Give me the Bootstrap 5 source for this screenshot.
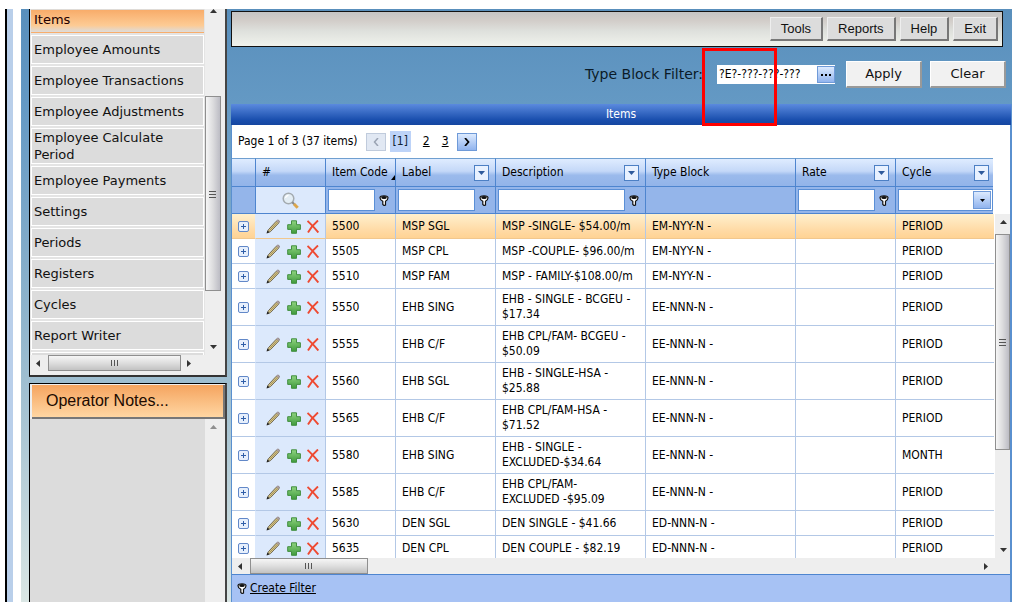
<!DOCTYPE html>
<html lang="en">
<head>
<meta charset="utf-8">
<meta name="viewport" content="width=device-width, initial-scale=1">
<title>Items</title>
<link href="https://cdn.jsdelivr.net/npm/bootstrap@5.3.0/dist/css/bootstrap.min.css" rel="stylesheet">
<style>
body{background:#fff;color:#000;font:12px/15px "DejaVu Sans Condensed","Noto Sans",sans-serif;padding:9px 6px 7px 5px}
a{color:#000}
.frame{border-left:2px solid #000}
.strip{width:6px;flex:none;margin-right:8px;background:#b9cfea}
.work{min-width:0;background:linear-gradient(#598fbc,#6499c4 16%,#8db3cc 50%,#a9c5d3 70%,#dae6e4);padding-left:8px}
.side{width:198px;gap:6px;margin-right:4px;font-family:"DejaVu Sans",sans-serif}
.pane{border:1px solid #000;border-right:2px solid #444;background:#eee}
.pane-top{border-top:0;border-bottom:2px solid #333;padding-bottom:4px}
.menu-view{height:346px;overflow:hidden;background:#e4e4e4}
.menu-list{gap:2px;padding:0 1px;border-radius:0}
.menu-list .list-group-item{border:1px solid #fff;border-radius:0;background:#dcdcdc;color:#111;font-size:13px;line-height:17px;padding:0 2px;min-height:29px;display:flex;align-items:center}
.menu-list .list-group-item.active{min-height:24px;padding-bottom:4px;background:linear-gradient(#f8ac6a,#fdcb94 70%,#dcdcdc);border-color:transparent;color:#200}
.bar-v{width:16px;background:#eee}
.bar-h{height:16px;background:#eee}
.arrow{width:16px;height:16px;flex:none;display:flex;align-items:center;justify-content:center}
.grip{border:1px solid #8f8f8f;display:flex;align-items:center;justify-content:center}
.bar-v .grip{background:linear-gradient(90deg,#f6f6f6,#dcdcde 50%,#bcbcc4)}
.bar-h .grip{background:linear-gradient(#f6f6f6,#dedede 50%,#c2c2c2)}
.menu-grip{height:195px}
.menu-grip-h{width:139px;margin-left:2px}
.notes-title{font:16px/32px "Liberation Sans",Arial,sans-serif;margin:1px 0 0 2px;padding-left:14px;background:linear-gradient(#f5a45f,#ffd6a2);border:solid #777;border-width:0 2px 2px 0;color:#200a00}
.notes-body{background:#dcdcdc}
.toolbar{border:1px solid #111;height:36px;margin:2px 9px 0 0;padding:0 4px;gap:4px;background:linear-gradient(#c4c4c4,#d2cdc9 25%,#dee0dc 55%,#f0f2ec)}
.btn-face{border:1px solid #eee;border-right:2px solid #777;border-bottom:2px solid #777;border-radius:0;padding:0 10px;font:13px/21px "Liberation Sans",Arial,sans-serif;background:#dcdcdc;color:#111}
.btn-big{width:76px;height:27px;font:13px/20px "DejaVu Sans",sans-serif;background:#f1f1f1;border-color:#fff #999 #999 #fff;border-width:1px 2px 2px 1px}
.filter{height:57px;padding:0 6px 2px 0}
.filter label{font:14px/17px "DejaVu Sans",sans-serif;color:#0b1b28;margin-right:14px}
.combo{width:118px;height:19px;background:#fff;margin-right:11px}
.combo input{border:0;padding:0 0 0 2px;width:96px;background:transparent;font-size:12px}
.mini{border:1px solid #6f9ad8;background:linear-gradient(#dceafe,#91b4ee);padding:0;border-radius:0;line-height:1;color:#000;display:flex;align-items:center;justify-content:center}
.combo .mini{width:18px;height:17px}
.marker{position:absolute;left:-15px;top:-17px;width:75px;height:78px;border:3px solid #f00;pointer-events:none}
.grid{background:#fff;border-right:2px solid #5a90cf;border-left:1px solid #5a90cf}
.grid-title{background:linear-gradient(#5b8ade,#1a4fae 75%,#1546a0);color:#fff;height:21px;line-height:21px;margin:0 -1px}
.pager{height:33px;padding-left:6px}
.pager span.now{background:#bdd3f8;color:#123;padding:3px 3px}
.pager a{margin-left:12px}
.pager .mini{width:20px;height:18px}
.pager .mini:disabled{border-color:#c0cbdc;background:#e1e8f3}
.side-gap{width:17px}
.data{table-layout:fixed;width:100%;border-collapse:separate;border-spacing:0}
.data th,.data td{font-weight:400;padding:3px 0 3px 6px;border-right:1px solid #b3c8e6;border-bottom:1px solid #b3c8e6;vertical-align:middle}
.data thead th,.data thead td{border-color:#4e85cf}
.data thead th{height:29px;border-top:1px solid #6f9fd0;background:linear-gradient(#dfecff,#c4d8f8 45%,#9bbaec 60%,#92b4e9);white-space:nowrap}
.data thead td{height:27px;padding:0 2px;background:#94b5ea}
.data tr>:last-child{border-right:0}
.data thead td.find,.data td.acts{background:#dce9fc}
.data td.acts{padding:1px 6px 0 10px}
.data td{height:25px}
.data tbody td:first-child{padding:0 6px;border-right-color:#dce9fc}
.data tr.hot td{background:linear-gradient(#fff0cd,#ffdba7 65%,#ffd394);border-bottom-color:#f1c78e}
.data tr.hot td.acts{background:#dce9fc}
.data td .form-control{height:22px;border:1px solid #5a8fd6;border-radius:0;padding:0 2px;font-size:12px;flex:1;min-width:0}
.drop{width:15px;height:16px;border:1px solid #4c7fc4;background:#e8f1ff;border-radius:0;padding:0;display:flex;align-items:center;justify-content:center;margin-right:6px}
.pick{position:relative;border:1px solid #5a8fd6;background:#fff;height:22px}
.pick select{border:0;appearance:none;width:100%;height:20px;background:transparent}
.pick .mini{position:absolute;right:1px;top:1px;width:18px;height:18px;pointer-events:none}
.rows{height:344px;overflow:hidden}
.icon-btn{border:0;padding:0;background:none;display:block;line-height:0}
.grid-grip{width:118px;margin-left:2px}
.rows-grip{height:216px}
.create{background:#a7c2f4;border-top:1px solid #4e85cf;height:28px;padding-left:5px;gap:3px}
svg{flex:none;display:block}
</style>
</head>
<body>
<svg width="0" height="0" class="position-absolute" aria-hidden="true">
<defs>
<linearGradient id="gGreen" x1="0" y1="0" x2="0" y2="1"><stop offset="0" stop-color="#8fd480"/><stop offset="1" stop-color="#3f9a3b"/></linearGradient>
</defs>
<symbol id="up" viewBox="0 0 7 4"><path d="M3.500 0L7 4H0z" fill="#333"/></symbol>
<symbol id="down" viewBox="0 0 7 4"><path d="M0 0h7L3.500 4z" fill="#333"/></symbol>
<symbol id="left" viewBox="0 0 4 7"><path d="M4 0v7L0 3.500z" fill="#333"/></symbol>
<symbol id="right" viewBox="0 0 4 7"><path d="M0 0v7l4-3.500z" fill="#333"/></symbol>
<symbol id="lines" viewBox="0 0 8 8"><path d="M0 1.500h7M0 4.500h7M0 7.500h7" stroke="#555"/></symbol>
<symbol id="linesh" viewBox="0 0 8 8"><path d="M.5 1v6M3.500 1v6M6.500 1v6" stroke="#555"/></symbol>
<symbol id="expand" viewBox="0 0 11 11"><rect x=".5" y=".5" width="10" height="10" rx="1.500" fill="#e6effc" stroke="#6288c8"/><path d="M3 5.500h5M5.500 3v5" stroke="#2f5ea8"/></symbol>
<symbol id="pencil" viewBox="0 0 14 15"><path d="M1.200 13.800L2.300 10.800 10.300 2.200Q12 .6 12.900 1.500t-.2 2.600L4.500 12.600z" fill="#d9c88a" stroke="#655c46" stroke-width=".9"/><path d="M3.700 11.400l8.200-8.600" stroke="#8d7a45" stroke-width=".7"/><path d="M.5 14.500l1-3 2 1.800z" fill="#222"/><path d="M10.500 1.800L12 .6l1.400 1.800-1.200 1.600z" fill="#a99ba5"/></symbol>
<symbol id="plus" viewBox="0 0 14 14"><path d="M4.500.8h5v3.900h3.900v4.700H9.500v3.900h-5V9.400H.7V4.700h3.800z" fill="url(#gGreen)" stroke="#438f40"/></symbol>
<symbol id="cross" viewBox="0 0 12 13"><path d="M.5 1Q5 5 11.300 12.500M11 .5Q5 5.500 1 12.500" fill="none" stroke="#ee4a32" stroke-width="1.900"/></symbol>
<symbol id="key" viewBox="0 0 10 11"><path d="M1 2.800Q1 .8 5 .8t4 2Q9 5 6.500 6.300V10L5 10.500 3.800 9.500V6.300Q1 5 1 2.800z" fill="#fff" stroke="#111" stroke-width="1.200"/><ellipse cx="5" cy="2.400" rx="2.800" ry="1.500" fill="#111"/></symbol>
<symbol id="lens" viewBox="0 0 17 17"><circle cx="6.500" cy="6.500" r="5.300" fill="#e3edf4" stroke="#a4abb0" stroke-width="1.500"/><path d="M3.500 6Q4 3.500 6.500 3.300" fill="none" stroke="#fff" stroke-width="1.200"/><path d="M10.300 10.300l2 2" stroke="#888" stroke-width="2"/><path d="M12 12l3.700 3.700" stroke="#dca54a" stroke-width="3"/></symbol>
</svg>

<div class="frame d-flex">
  <div class="strip"></div>
  <div class="work d-flex flex-grow-1">
    <aside class="side d-flex flex-column flex-shrink-0">
      <div class="pane pane-top">
        <div class="d-flex">
          <nav class="menu-view flex-grow-1">
            <div class="menu-list list-group">
              <a href="#" class="list-group-item active">Items</a>
              <a href="#" class="list-group-item">Employee Amounts</a>
              <a href="#" class="list-group-item">Employee Transactions</a>
              <a href="#" class="list-group-item">Employee Adjustments</a>
              <a href="#" class="list-group-item">Employee Calculate<br>Period</a>
              <a href="#" class="list-group-item">Employee Payments</a>
              <a href="#" class="list-group-item">Settings</a>
              <a href="#" class="list-group-item">Periods</a>
              <a href="#" class="list-group-item">Registers</a>
              <a href="#" class="list-group-item">Cycles</a>
              <a href="#" class="list-group-item">Report Writer</a>
              <a href="#" class="list-group-item" aria-label="More"></a>
            </div>
          </nav>
          <div class="bar-v d-flex flex-column me-1">
            <span class="arrow h-auto pt-0"><svg width="7" height="4"><use href="#up"/></svg></span>
            <span class="grip menu-grip mt-auto mb-5"><svg width="8" height="8"><use href="#lines"/></svg></span>
            <span class="arrow"><svg width="7" height="4"><use href="#down"/></svg></span>
          </div>
        </div>
        <div class="bar-h d-flex me-4 pe-1">
          <span class="arrow"><svg width="4" height="7"><use href="#left"/></svg></span>
          <span class="grip menu-grip-h"><svg width="8" height="8"><use href="#linesh"/></svg></span>
          <span class="arrow"><svg width="4" height="7"><use href="#right"/></svg></span>
        </div>
      </div>
      <section class="pane border-bottom-0 flex-grow-1 d-flex flex-column">
        <h2 class="notes-title">Operator Notes...</h2>
        <div class="d-flex flex-grow-1">
          <div class="notes-body flex-grow-1"></div>
          <div class="bar-v me-1"><span class="arrow"><svg width="7" height="4" opacity=".5"><use href="#up"/></svg></span></div>
        </div>
      </section>
    </aside>

    <main class="flex-grow-1 overflow-hidden">
      <div class="toolbar d-flex justify-content-end align-items-center">
        <button class="btn btn-face">Tools</button>
        <button class="btn btn-face">Reports</button>
        <button class="btn btn-face">Help</button>
        <button class="btn btn-face">Exit</button>
      </div>
      <div class="filter d-flex justify-content-end align-items-center">
        <label for="block">Type Block Filter:</label>
        <div class="combo d-flex align-items-center position-relative">
          <input id="block" type="text" value="?E?-???-???-???">
          <button class="mini ms-auto" aria-label="Choose"><svg width="10" height="2"><path d="M0 1h2M4 1h2M8 1h2" stroke="#000" stroke-width="2"/></svg></button>
          <div class="marker"></div>
        </div>
        <button class="btn btn-face btn-big me-2">Apply</button>
        <button class="btn btn-face btn-big">Clear</button>
      </div>

      <section class="grid">
        <div class="grid-title text-center">Items</div>
        <div class="pager d-flex align-items-center">
          <span class="me-2">Page 1 of 3 (37 items)</span>
          <button class="mini me-1" disabled aria-label="Previous"><svg width="6" height="8"><path d="M5 0L1.500 4 5 8" fill="none" stroke="#9aa3b3" stroke-width="1.500"/></svg></button>
          <span class="now">[1]</span>
          <a href="#">2</a>
          <a class="me-2" href="#">3</a>
          <button class="mini" aria-label="Next"><svg width="6" height="8"><path d="M1 0l3.500 4L1 8" fill="none" stroke="#000" stroke-width="1.700"/></svg></button>
        </div>
        <div class="d-flex">
          <table class="data">
            <colgroup><col style="width:24px"><col style="width:70px"><col style="width:70px"><col style="width:100px"><col style="width:150px"><col style="width:150px"><col style="width:100px"><col></colgroup>
            <thead>
              <tr>
                <th></th><th>#</th>
                <th><div class="d-flex align-items-end justify-content-between">Item Code<svg width="4" height="5"><path d="M4 0v5H0z"/></svg></div></th>
                <th><div class="d-flex justify-content-between">Label<button class="drop" aria-label="Filter label"><svg width="7" height="4"><path d="M0 0h7L3.500 4z" fill="#2e5a9c"/></svg></button></div></th>
                <th><div class="d-flex justify-content-between">Description<button class="drop" aria-label="Filter description"><svg width="7" height="4"><path d="M0 0h7L3.500 4z" fill="#2e5a9c"/></svg></button></div></th>
                <th>Type Block</th>
                <th><div class="d-flex justify-content-between">Rate<button class="drop" aria-label="Filter rate"><svg width="7" height="4"><path d="M0 0h7L3.500 4z" fill="#2e5a9c"/></svg></button></div></th>
                <th><div class="d-flex justify-content-between">Cycle<button class="drop me-1" aria-label="Filter cycle"><svg width="7" height="4"><path d="M0 0h7L3.500 4z" fill="#2e5a9c"/></svg></button></div></th>
              </tr>
              <tr>
                <td></td>
                <td class="find"><button class="icon-btn mx-auto" aria-label="Search"><svg width="17" height="17"><use href="#lens"/></svg></button></td>
                <td><div class="d-flex align-items-center gap-1 pe-1"><input class="form-control" aria-label="Item code"><svg width="10" height="11"><use href="#key"/></svg></div></td>
                <td><div class="d-flex align-items-center gap-1 pe-1"><input class="form-control" aria-label="Label"><svg width="10" height="11"><use href="#key"/></svg></div></td>
                <td><div class="d-flex align-items-center gap-1 pe-1"><input class="form-control" aria-label="Description"><svg width="10" height="11"><use href="#key"/></svg></div></td>
                <td></td>
                <td><div class="d-flex align-items-center gap-1 pe-1"><input class="form-control" aria-label="Rate"><svg width="10" height="11"><use href="#key"/></svg></div></td>
                <td class="pe-0"><div class="pick"><select aria-label="Cycle"><option></option></select><span class="mini"><svg width="5" height="3"><path d="M0 0h5L2.500 3z"/></svg></span></div></td>
              </tr>
            </thead>
          </table>
          <div class="side-gap flex-shrink-0"></div>
        </div>
        <div class="rows d-flex">
          <div class="flex-grow-1 overflow-hidden">
            <table class="data">
              <colgroup><col style="width:24px"><col style="width:70px"><col style="width:70px"><col style="width:100px"><col style="width:150px"><col style="width:150px"><col style="width:100px"><col></colgroup>
              <tbody id="items"></tbody>
            </table>
          </div>
          <div class="bar-v d-flex flex-column ms-auto me-0 border-start border-white">
            <span class="arrow"><svg width="7" height="4"><use href="#up"/></svg></span>
            <span class="grip rows-grip mt-1"><svg width="8" height="8"><use href="#lines"/></svg></span>
            <span class="arrow mt-auto"><svg width="7" height="4"><use href="#down"/></svg></span>
          </div>
        </div>
        <div class="bar-h d-flex">
          <span class="arrow"><svg width="4" height="7"><use href="#left"/></svg></span>
          <span class="grip grid-grip"><svg width="8" height="8"><use href="#linesh"/></svg></span>
          <span class="arrow ms-auto me-3"><svg width="4" height="7"><use href="#right"/></svg></span>
        </div>
        <div class="create d-flex align-items-center"><svg width="10" height="11"><use href="#key"/></svg><a href="#">Create Filter</a></div>
      </section>
    </main>
  </div>
</div>

<script src="https://cdn.jsdelivr.net/npm/bootstrap@5.3.0/dist/js/bootstrap.bundle.min.js"></script>
<script>
const items = [
  ["5500","MSP SGL","MSP -SINGLE- $54.00/m","EM-NYY-N -","PERIOD"],
  ["5505","MSP CPL","MSP -COUPLE- $96.00/m","EM-NYY-N -","PERIOD"],
  ["5510","MSP FAM","MSP - FAMILY-$108.00/m","EM-NYY-N -","PERIOD"],
  ["5550","EHB SING","EHB - SINGLE - BCGEU -<br>$17.34","EE-NNN-N -","PERIOD"],
  ["5555","EHB C/F","EHB CPL/FAM- BCGEU -<br>$50.09","EE-NNN-N -","PERIOD"],
  ["5560","EHB SGL","EHB - SINGLE-HSA -<br>$25.88","EE-NNN-N -","PERIOD"],
  ["5565","EHB C/F","EHB CPL/FAM-HSA -<br>$71.52","EE-NNN-N -","PERIOD"],
  ["5580","EHB SING","EHB - SINGLE -<br>EXCLUDED-$34.64","EE-NNN-N -","MONTH"],
  ["5585","EHB C/F","EHB CPL/FAM-<br>EXCLUDED -$95.09","EE-NNN-N -","PERIOD"],
  ["5630","DEN SGL","DEN SINGLE - $41.66","ED-NNN-N -","PERIOD"],
  ["5635","DEN CPL","DEN COUPLE - $82.19","ED-NNN-N -","PERIOD"]
];
const icon = (id, w, h, name) =>
  `<button class="icon-btn" aria-label="${name}"><svg width="${w}" height="${h}"><use href="#${id}"/></svg></button>`;
document.getElementById("items").innerHTML = items.map(([code, label, desc, block, cycle], i) => `
  <tr class="${i ? "" : "hot"}">
    <td>${icon("expand", 11, 11, "Expand")}</td>
    <td class="acts"><div class="d-flex align-items-center justify-content-between">${icon("pencil", 14, 15, "Edit")}${icon("plus", 14, 14, "New")}${icon("cross", 12, 13, "Delete")}</div></td>
    <td>${code}</td><td>${label}</td><td class="text-nowrap">${desc}</td><td>${block}</td><td></td><td>${cycle}</td>
  </tr>`).join("");
</script>
</body>
</html>
